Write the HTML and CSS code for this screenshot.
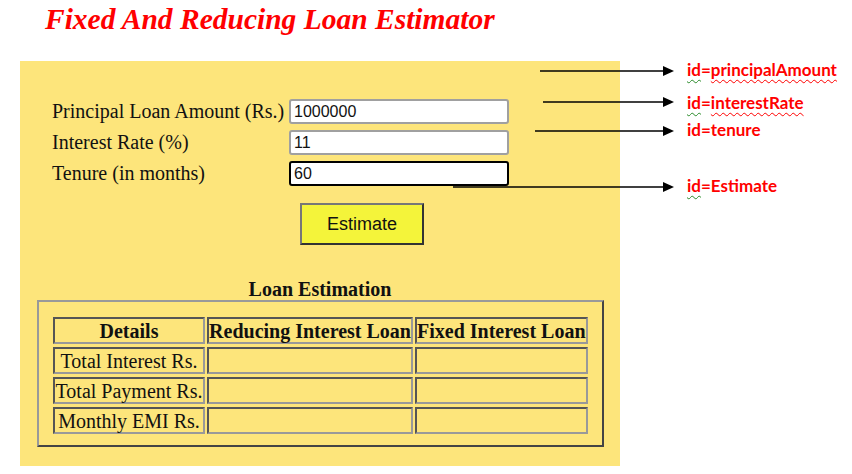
FILE: index.html
```html
<!DOCTYPE html>
<html>
<head>
<meta charset="utf-8">
<link rel="stylesheet" href="styles.css">
</head>
<body>
<h1 class="title">Fixed And Reducing Loan Estimator</h1>
<div class="panel">
  <div class="form">
    <label class="lbl">Principal Loan Amount (Rs.)</label>
    <input class="inp" type="text" value="1000000">
    <label class="lbl">Interest Rate (%)</label>
    <input class="inp" type="text" value="11">
    <label class="lbl">Tenure (in months)</label>
    <input class="inp focus" type="text" value="60">
  </div>
  <div class="btnrow"><button class="btn">Estimate</button></div>
  <div class="est-title">Loan Estimation</div>
  <div class="results">
    <table class="tbl">
      <tr><th class="c1">Details</th><th class="c2">Reducing Interest Loan</th><th class="c3">Fixed Interest Loan</th></tr>
      <tr><td>Total Interest Rs.</td><td></td><td></td></tr>
      <tr><td>Total Payment Rs.</td><td></td><td></td></tr>
      <tr><td>Monthly EMI Rs.</td><td></td><td></td></tr>
    </table>
  </div>
</div>
<svg class="arrows" width="852" height="474" viewBox="0 0 852 474">
  <g stroke="#000" stroke-width="1.5">
    <line x1="540" y1="71" x2="664" y2="71"/>
    <line x1="543" y1="102" x2="664" y2="102"/>
    <line x1="535" y1="131" x2="664" y2="131"/>
    <line x1="453" y1="187" x2="664" y2="187"/>
  </g>
  <g fill="#000">
    <polygon points="663,66 674,71 663,76"/>
    <polygon points="663,97 674,102 663,107"/>
    <polygon points="663,126 674,131 663,136"/>
    <polygon points="663,182 674,187 663,192"/>
  </g>
</svg>
<div class="note n1"><span class="g">id</span>=<span class="r">principalAmount</span></div>
<div class="note n2"><span class="g">id</span>=<span class="r">interestRate</span></div>
<div class="note n3">id=tenure</div>
<div class="note n4"><span class="g">id</span>=Estimate</div>
</body>
</html>
```
FILE: styles.css
```css
html, body { margin: 0; padding: 0; background: #fff; }
body { width: 852px; height: 474px; position: relative; overflow: hidden; font-family: "Liberation Serif", "Times New Roman", serif; color: #111; }

.title {
  margin: 0;
  padding: 3px 0 0 45px;
  height: 57px;
  box-sizing: border-box;
  font-family: "Liberation Serif", serif;
  font-style: italic;
  font-weight: bold;
  font-size: 29.5px;
  line-height: 33px;
  color: #ff0000;
}

.panel {
  margin-left: 20px;
  margin-top: 4px;
  width: 600px;
  height: 405px;
  background: #fde57b;
  box-sizing: border-box;
  padding-top: 38px;
}

.form {
  display: grid;
  grid-template-columns: 237px 220px;
  row-gap: 6px;
  padding-left: 32px;
  align-items: center;
}
.lbl { font-size: 20px; line-height: 25px; white-space: nowrap; }
.inp {
  box-sizing: border-box;
  width: 220px;
  height: 25px;
  margin: 0;
  border: 2px solid #a0a0a0;
  border-radius: 3px;
  background: #fff;
  font-family: "Liberation Sans", Arial, sans-serif;
  font-size: 16px;
  padding: 0 3px;
  color: #111;
  outline: none;
}
.inp.focus { border-color: #000; }

.btnrow { padding-left: 280px; margin-top: 17px; }
.btn {
  box-sizing: border-box;
  width: 124px;
  height: 42px;
  background: #f4f43a;
  border: 2px solid;
  border-color: #777 #333 #333 #777;
  font-family: "Liberation Sans", Arial, sans-serif;
  font-size: 18px;
  color: #111;
  padding: 0;
}

.est-title {
  margin-top: 33px;
  text-align: center;
  font-weight: bold;
  font-size: 20px;
  line-height: 22px;
}

.results {
  margin: 0 0 0 17px;
  width: 567px;
  height: 147px;
  box-sizing: border-box;
  border: 2px solid;
  border-color: #999 #444 #444 #999;
  padding: 12px 0 0 12px;
}

.tbl {
  border-collapse: separate;
  border-spacing: 2px 3px;
  font-size: 20px;
}
.tbl th, .tbl td {
  box-sizing: border-box;
  height: 27px;
  border: 2px solid;
  border-color: #555 #999 #999 #555;
  padding: 0;
  line-height: 22px;
  text-align: center;
  white-space: nowrap;
}
.c1 { width: 152px; }
.c2 { width: 206px; }
.c3 { width: 172px; }

.arrows { position: absolute; left: 0; top: 0; pointer-events: none; }

.note {
  position: absolute;
  left: 687px;
  font-family: Lato, "Open Sans", sans-serif;
  font-weight: bold;
  font-size: 17px;
  line-height: 18px;
  color: #ff0000;
  white-space: nowrap;
}
.note .g { text-decoration: underline wavy #2a8a2a; text-decoration-thickness: 1px; text-underline-offset: 3px; }
.note .r { text-decoration: underline wavy #ff0000; text-decoration-thickness: 1px; text-underline-offset: 3px; }
.n1 { top: 61px; }
.n2 { top: 94px; }
.n3 { top: 121px; }
.n4 { top: 177px; }
```
